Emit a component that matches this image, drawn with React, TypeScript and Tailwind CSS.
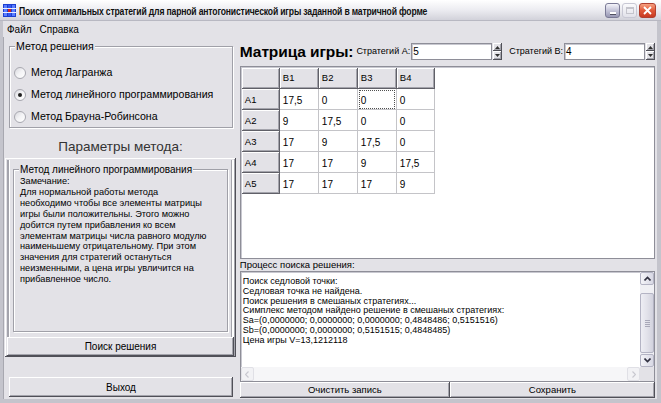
import React from 'react';

const FONT = { fontFamily: '"Liberation Sans", Arial, sans-serif' };

const raised =
  'bg-[#e3e2e7] shadow-[inset_-1px_-1px_#505058,inset_1px_1px_#ffffff,inset_-2px_-2px_#a4a4ac]';
const sunken =
  'border border-[#8e8e98] shadow-[inset_1px_1px_#c8c8d0]';

function Radio({ checked, label }: { checked?: boolean; label: string }) {
  return (
    <div className="flex items-center h-[22px] pl-[4px]">
      <span className="relative w-[12px] h-[12px] rounded-full border border-[#a8a8b0] bg-gradient-to-br from-[#d8d8de] via-[#f4f4f6] to-[#ffffff] flex items-center justify-center">
        {checked && <span className="w-[4px] h-[4px] rounded-full bg-[#202020]" />}
      </span>
      <span className="ml-[5px] text-[10.6px] text-black whitespace-nowrap">{label}</span>
    </div>
  );
}

function Spin() {
  return (
    <div className="flex flex-col w-[9px] h-[17px] ml-[1px] shrink-0">
      <div className={`${raised} h-[8px] flex items-center justify-center`}>
        <svg width="5" height="3" viewBox="0 0 5 3"><path d="M2.5 0L5 3H0z" fill="#303030" /></svg>
      </div>
      <div className={`${raised} h-[9px] flex items-center justify-center`}>
        <svg width="5" height="3" viewBox="0 0 5 3"><path d="M0 0h5L2.5 3z" fill="#303030" /></svg>
      </div>
    </div>
  );
}

const matrix = [
  ['17,5', '0', '0', '0'],
  ['9', '17,5', '0', '0'],
  ['17', '9', '17,5', '0'],
  ['17', '17', '9', '17,5'],
  ['17', '17', '17', '9'],
];
const colW = [38, 39, 39, 39, 38];

const memo = [
  'Поиск седловой точки:',
  'Седловая точка не найдена.',
  'Поиск решения в смешаных стратегиях...',
  'Симплекс методом найдено решение в смешаных стратегиях:',
  'Sa=(0,0000000; 0,0000000; 0,0000000; 0,4848486; 0,5151516)',
  'Sb=(0,0000000; 0,0000000; 0,5151515; 0,4848485)',
  'Цена игры V=13,1212118',
];

const note = [
  'Замечание:',
  'Для нормальной работы метода',
  'необходимо чтобы все элементы матрицы',
  'игры были положительны. Этого можно',
  'добится путем прибавления ко всем',
  'элементам матрицы числа равного модулю',
  'наименьшему отрицательному. При этом',
  'значения для стратегий остануться',
  'неизменными, а цена игры увличится на',
  'прибавленное число.',
];

function AppIcon() {
  return (
    <svg width="13" height="13" viewBox="0 0 13 13">
      <rect x="0" y="0" width="13" height="13" fill="#1c3fd0" />
      <rect x="1" y="1" width="3" height="11" fill="#5a7dff" />
      <rect x="5" y="1" width="3" height="11" fill="#3358f0" />
      <rect x="9" y="1" width="3" height="11" fill="#5a7dff" />
      <rect x="0" y="4" width="13" height="1" fill="#e8ecff" />
      <rect x="0" y="8" width="13" height="1" fill="#e8ecff" />
      <rect x="5" y="5" width="3" height="3" fill="#d02020" />
    </svg>
  );
}

export default function App() {
  return (
    <div style={FONT} className="w-[661px] h-[403px] overflow-hidden bg-[#c4c4cc] flex flex-col">
      {/* Title bar */}
      <div className="h-[21px] flex items-center bg-gradient-to-b from-[#ffffff] via-[#ececf1] to-[#d2d2da] border-b border-[#b8b8c2]">
        <div className="ml-[3px] mt-[1px]"><AppIcon /></div>
        <div className="ml-[3px] w-[410px] overflow-visible">
          <span className="inline-block origin-left scale-x-[0.82] text-[10.5px] font-bold text-[#101010] tracking-[-0.2px] whitespace-nowrap">
            Поиск оптимальных стратегий для парной антогонистической игры заданной в матричной форме
          </span>
        </div>
        <div className="ml-auto mr-[5px] flex gap-[2px]">
          <div className="w-[15px] h-[15px] rounded-[3px] border border-[#7a7a96] bg-gradient-to-b from-[#f4f4fa] via-[#c4c4d8] to-[#9898b4] flex items-end justify-center pb-[3px]">
            <div className="w-[6px] h-[2px] bg-[#ffffff] shadow-[0_1px_#505060]" />
          </div>
          <div className="w-[15px] h-[15px] rounded-[3px] border border-[#c8c8d4] bg-gradient-to-b from-[#fafafc] to-[#e2e2ea] flex items-center justify-center">
            <div className="w-[8px] h-[7px] border border-[#c4c4cc] border-t-2" />
          </div>
          <div className="w-[17px] h-[15px] rounded-[3px] border border-[#b04030] bg-gradient-to-b from-[#f6a080] via-[#e05838] to-[#c83a22] flex items-center justify-center">
            <svg width="9" height="9" viewBox="0 0 9 9"><path d="M1 1l7 7M8 1L1 8" stroke="#fff" strokeWidth="1.8" /></svg>
          </div>
        </div>
      </div>

      <div className="flex-1 flex flex-col mx-[3px] mr-[4px] mb-[4px] bg-[#e3e2e7]">
        {/* Menu */}
        <div className="h-[16px] flex items-center gap-[8px] pl-[4px] text-[10px] text-black">
          <span>Файл</span>
          <span>Справка</span>
        </div>

        <div className="flex-1 flex">
          {/* Left column */}
          <div className="w-[234px] flex flex-col border-l border-[#a8a8b0]">
            <div className="mt-[9px] ml-[5px] w-[224px] h-[82px] relative border border-[#a0a0a8] shadow-[1px_1px_#ffffff,inset_1px_1px_#ffffff]">
              <span className="absolute left-[5px] top-[-7px] bg-[#e3e2e7] text-[10.6px] leading-[13px] px-[1px]">Метод решения</span>
              <div className="pt-[15px]">
                <Radio label="Метод Лагранжа" />
                <Radio label="Метод линейного программирования" checked />
                <Radio label="Метод Брауна-Робинсона" />
              </div>
            </div>

            <div className="h-[30px] pt-[10px] text-center text-[13.5px] leading-[18px] text-[#333333]">
              Параметры метода:
            </div>

            <div className={`ml-[1px] w-[231px] h-[199px] ${raised} flex flex-col px-[2px] pt-[2px]`}>
              <div className="flex-1 border-x-2 border-t-0 border-l-[#a4a4ac] border-r-[#ffffff] px-[4px] pt-[9px] pb-[5px] shadow-[inset_1px_0_#ffffff,inset_-1px_0_#a4a4ac]">
                <div className="relative h-full border border-[#a0a0a8] shadow-[1px_1px_#ffffff,inset_1px_1px_#ffffff] pl-[6px] pt-[6px]">
                  <span className="absolute left-[5px] top-[-7px] bg-[#e3e2e7] text-[10px] leading-[13px] px-[1px] whitespace-nowrap">
                    Метод линейного программирования
                  </span>
                  <div className="text-[9.2px] leading-[10.9px] text-black whitespace-nowrap">
                    {note.map((l) => (
                      <div key={l}>{l}</div>
                    ))}
                  </div>
                </div>
              </div>
              <div className={`${raised} h-[19px] mb-[1px] flex items-center justify-center text-[10px]`}>
                Поиск решения
              </div>
            </div>

            <div className={`mt-[20px] ml-[5px] w-[224px] h-[20px] ${raised} flex items-center justify-center text-[10px]`}>
              Выход
            </div>
          </div>

          {/* Right column */}
          <div className="flex-1 flex flex-col pl-[3px] pr-[2px]">
            <div className="h-[29px] flex items-center">
              <span className="shrink-0 whitespace-nowrap text-[15.5px] font-bold leading-none text-black tracking-[-0.1px]">Матрица игры:</span>
              <span className="shrink-0 ml-[3px] text-[9px] whitespace-nowrap">Стратегий А:</span>
              <div className={`shrink-0 ml-[1px] w-[81px] h-[17px] bg-white ${sunken} text-[10px] leading-[15px] pl-[1px]`}>5</div>
              <Spin />
              <span className="shrink-0 ml-[7px] text-[9px] whitespace-nowrap">Стратегий В:</span>
              <div className={`shrink-0 ml-[1px] w-[81px] h-[17px] bg-white ${sunken} text-[10px] leading-[15px] pl-[1px]`}>4</div>
              <Spin />
            </div>

            {/* Grid */}
            <div className={`h-[193px] bg-white ${sunken} pl-[1px] pt-[1px]`}>
              <div className="flex">
                {['', 'B1', 'B2', 'B3', 'B4'].map((h, i) => (
                  <div
                    key={i}
                    style={{ width: colW[i] }}
                    className="h-[21px] bg-[#e3e2e7] border-r border-b border-[#606068] shadow-[inset_1px_1px_#ffffff,inset_-1px_-1px_#a4a4ac] text-[9.5px] pl-[3px] pt-[3px]"
                  >
                    {h}
                  </div>
                ))}
              </div>
              {matrix.map((row, r) => (
                <div key={r} className="flex">
                  <div
                    style={{ width: colW[0] }}
                    className="h-[21px] bg-[#e3e2e7] border-r border-b border-[#606068] shadow-[inset_1px_1px_#ffffff,inset_-1px_-1px_#a4a4ac] text-[9.5px] pl-[3px] pt-[4px]"
                  >
                    A{r + 1}
                  </div>
                  {row.map((v, c) => (
                    <div
                      key={c}
                      style={{ width: colW[c + 1] }}
                      className="h-[21px] border-r border-b border-[#c4c4c8] text-[10px] pl-[3px] pt-[4px]"
                    >
                      {r === 0 && c === 2 ? (
                        <div className="-ml-[2px] -mt-[3px] h-[19px] w-[36px] border border-dotted border-[#505050] pl-[1px] pt-[2px]">{v}</div>
                      ) : (
                        v
                      )}
                    </div>
                  ))}
                </div>
              ))}
            </div>

            <div className="h-[13px] text-[9.5px] leading-[13px] mt-[-1px]">Процесс поиска решения:</div>

            {/* Memo */}
            <div className={`h-[111px] bg-white ${sunken} flex flex-col`}>
              <div className="flex-1 flex min-h-0">
                <div className="flex-1 pl-[2px] pt-[5px] text-[9px] leading-[9.75px] whitespace-nowrap overflow-hidden">
                  {memo.map((l) => (
                    <div key={l}>{l}</div>
                  ))}
                </div>
                {/* vertical scrollbar */}
                <div className="w-[14px] bg-[#f0f0f4] flex flex-col">
                  <div className="h-[13px] rounded-[2px] border border-[#b4b4c4] bg-gradient-to-r from-[#f4f4f8] to-[#d8d8e4] flex items-center justify-center">
                    <svg width="7" height="5" viewBox="0 0 7 5"><path d="M0.5 4.5L3.5 1.5L6.5 4.5" stroke="#303040" strokeWidth="1.6" fill="none" /></svg>
                  </div>
                  <div className="h-[8px]" />
                  <div className="flex-1 rounded-[2px] border border-[#b4b4c4] bg-gradient-to-r from-[#eeeef4] via-[#e2e2ea] to-[#d2d2de] flex items-center justify-center">
                    <div className="flex flex-col gap-[1px]">
                      <div className="w-[5px] h-[1px] bg-[#a8a8b8]" />
                      <div className="w-[5px] h-[1px] bg-[#a8a8b8]" />
                      <div className="w-[5px] h-[1px] bg-[#a8a8b8]" />
                      <div className="w-[5px] h-[1px] bg-[#a8a8b8]" />
                    </div>
                  </div>
                  <div className="h-[13px] mt-[1px] rounded-[2px] border border-[#b4b4c4] bg-gradient-to-r from-[#f4f4f8] to-[#d8d8e4] flex items-center justify-center">
                    <svg width="7" height="5" viewBox="0 0 7 5"><path d="M0.5 0.5L3.5 3.5L6.5 0.5" stroke="#303040" strokeWidth="1.6" fill="none" /></svg>
                  </div>
                </div>
              </div>
              {/* horizontal scrollbar */}
              <div className="h-[14px] flex">
                <div className="flex-1 flex bg-[#f6f6f8]">
                  <div className="w-[13px] h-[14px] rounded-[2px] border border-[#e0e0e6] bg-[#f2f2f5] flex items-center justify-center">
                    <svg width="4" height="7" viewBox="0 0 4 7"><path d="M3.5 0.5L0.5 3.5L3.5 6.5" stroke="#c8c8d0" strokeWidth="1.2" fill="none" /></svg>
                  </div>
                  <div className="flex-1" />
                  <div className="w-[13px] h-[14px] rounded-[2px] border border-[#e0e0e6] bg-[#f2f2f5] flex items-center justify-center">
                    <svg width="4" height="7" viewBox="0 0 4 7"><path d="M0.5 0.5L3.5 3.5L0.5 6.5" stroke="#c8c8d0" strokeWidth="1.2" fill="none" /></svg>
                  </div>
                </div>
                <div className="w-[14px] bg-[#e3e2e7]" />
              </div>
            </div>

            <div className="flex h-[16px]">
              <div className={`w-[210px] ${raised} flex items-center justify-center text-[9.5px]`}>Очистить запись</div>
              <div className={`flex-1 ${raised} flex items-center justify-center text-[9.5px]`}>Сохранить</div>
            </div>
          </div>
        </div>
      </div>
    </div>
  );
}
